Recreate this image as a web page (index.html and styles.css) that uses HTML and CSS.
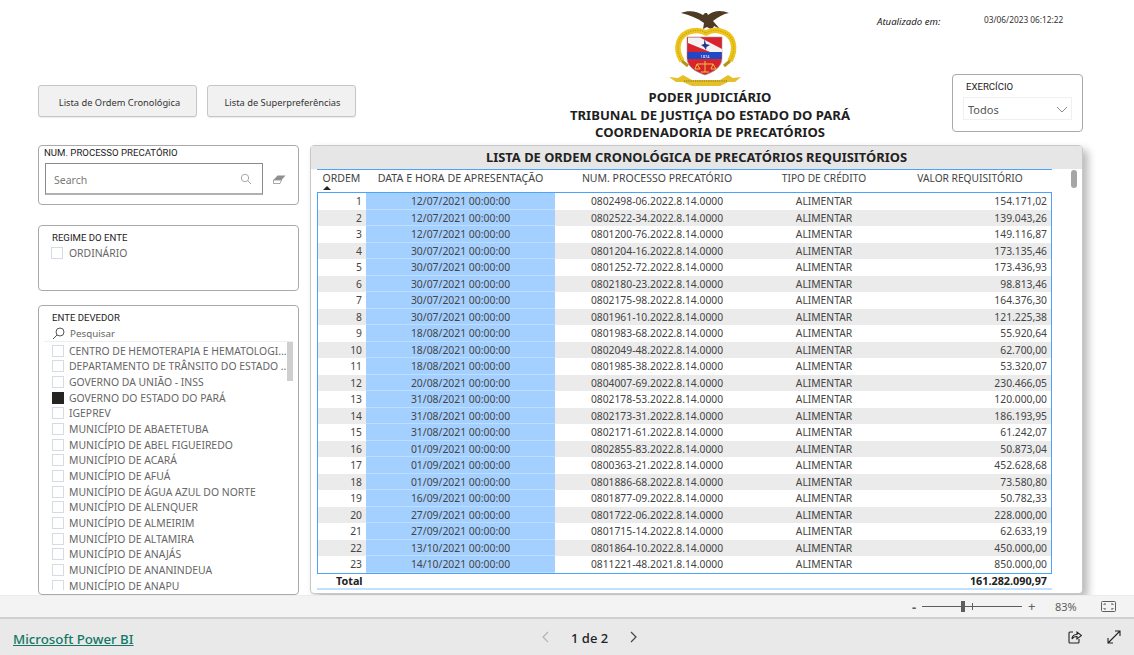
FILE: index.html
```html
<!DOCTYPE html>
<html lang="pt-BR">
<head>
<meta charset="utf-8">
<title>Lista de Ordem Cronológica</title>
<link rel="stylesheet" href="styles.css">
</head>
<body>
<main class="canvas">
  <header class="top">
    <nav class="tabs">
      <button class="tab tab-a">Lista de Ordem Cronológica</button>
      <button class="tab tab-b">Lista de Superpreferências</button>
    </nav>
    <div class="brand">
      <svg class="logo" viewBox="0 0 72 80" width="72" height="80" aria-label="Brasão">
        <path d="M11 5 C18 2 27 3 33 7 L35 5 L37 5 L38 7 C44 2 52 2 59 5 C53 6 48 9 43 13 L50 21 L44 18 L42 22 L37 19 L33 21 L34 15 C27 10 20 7 11 5 Z" fill="#4f3a26"/>
        <path d="M12 53 C4 40 8 26 22 23 C30 21 34 24 36 25 C38 24 43 21 50 23 C64 26 67 40 60 53" fill="none" stroke="#eec51c" stroke-width="5.5"/>
        <path d="M12 53 C4 40 8 26 22 23 C30 21 34 24 36 25 C38 24 43 21 50 23 C64 26 67 40 60 53" fill="none" stroke="#b99c1e" stroke-width="1.2" stroke-dasharray="1 1.4"/>
        <path d="M12 53 L18 58 M60 53 L54 58" stroke="#b89412" stroke-width="3"/>
        <path d="M-1 69 L8 70 L13 67 L22 72 L50 72 L58 67 L63 70 L71 69 L65 74 L58 74 L50 78 L22 78 L13 74 L6 74 Z" fill="#e6c02a"/>
        <path d="M14 73 H58" stroke="#80701f" stroke-width="1.2" stroke-dasharray="1.2 1"/>
        <path d="M17 29 H52 V50 C52 59 44 64 35 67 C26 64 17 59 17 50 Z" fill="#d8232f" stroke="#9a9a9a" stroke-width=".6"/>
        <path d="M18 29.5 H30 L52 41 V44 H40 L18 35 Z" fill="#f3f1f1"/>
        <path d="M34.5 31 L36 36 L40 37 L36.5 39 L36 42 L34 39 L31 37 L34 36 Z" fill="#23348f"/>
        <rect x="17.5" y="44" width="34" height="7" fill="#2148c4"/>
        <text class="logo-year" x="35" y="49.5" text-anchor="middle">1874</text>
        <path d="M35 53 V64 M27 56 H43 M27 56 L25 61 H30 Z M43 56 L41 61 H46 Z M31 64 H39" fill="none" stroke="#e7c23a" stroke-width="1"/>
      </svg>
      <h1 class="title">PODER JUDICIÁRIO<br>TRIBUNAL DE JUSTIÇA DO ESTADO DO PARÁ<br>COORDENADORIA DE PRECATÓRIOS</h1>
    </div>
    <div class="side">
      <div class="updated">
        <span class="updated-label">Atualizado em:</span>
        <span class="updated-date">03/06/2023 06:12:22</span>
      </div>
      <section class="card year">
        <h2 class="card-label">EXERCÍCIO</h2>
        <div class="select">
          <span>Todos</span>
          <svg width="12" height="7" viewBox="0 0 12 7"><path d="M1 1 L6 6 L11 1" fill="none" stroke="#8a8a8a"/></svg>
        </div>
      </section>
    </div>
  </header>

  <div class="body">
    <aside class="filters">
      <section class="card search-card">
        <h2 class="card-label">NUM. PROCESSO PRECATÓRIO</h2>
        <div class="search-row">
          <div class="search-box">
            <span class="search-text">Search</span>
            <svg width="12" height="12" viewBox="0 0 12 12"><circle cx="5" cy="5" r="3.7" fill="none" stroke="#a8a8a8"/><path d="M7.8 7.8 L11 11" stroke="#a8a8a8"/></svg>
          </div>
          <svg class="eraser" width="13" height="9" viewBox="0 0 13 9"><path d="M4.5 0.5 H12.5 L8.5 5 H0.5 Z" fill="#8f8f8f"/><path d="M0.5 5 H8.5 L7 8.5 H0.5 Z" fill="#fff" stroke="#8f8f8f" stroke-width=".8"/></svg>
        </div>
      </section>

      <section class="card regime">
        <h2 class="card-label">REGIME DO ENTE</h2>
        <div class="opt"><i class="box"></i>ORDINÁRIO</div>
      </section>

      <section class="card ente">
        <h2 class="card-label">ENTE DEVEDOR</h2>
        <div class="find">
          <svg width="13" height="13" viewBox="0 0 13 13"><circle cx="8" cy="5" r="4" fill="none" stroke="#555"/><path d="M5 8 L1 12" stroke="#555"/></svg>
          <span>Pesquisar</span>
        </div>
        <div class="list">
          <div class="opt"><i class="box"></i><span class="opt-text">CENTRO DE HEMOTERAPIA E HEMATOLOGI...</span></div>
          <div class="opt"><i class="box"></i><span class="opt-text">DEPARTAMENTO DE TRÂNSITO DO ESTADO ...</span></div>
          <div class="opt"><i class="box"></i><span class="opt-text">GOVERNO DA UNIÃO - INSS</span></div>
          <div class="opt"><i class="box box-on"></i><span class="opt-text">GOVERNO DO ESTADO DO PARÁ</span></div>
          <div class="opt"><i class="box"></i><span class="opt-text">IGEPREV</span></div>
          <div class="opt"><i class="box"></i><span class="opt-text">MUNICÍPIO DE ABAETETUBA</span></div>
          <div class="opt"><i class="box"></i><span class="opt-text">MUNICÍPIO DE ABEL FIGUEIREDO</span></div>
          <div class="opt"><i class="box"></i><span class="opt-text">MUNICÍPIO DE ACARÁ</span></div>
          <div class="opt"><i class="box"></i><span class="opt-text">MUNICÍPIO DE AFUÁ</span></div>
          <div class="opt"><i class="box"></i><span class="opt-text">MUNICÍPIO DE ÁGUA AZUL DO NORTE</span></div>
          <div class="opt"><i class="box"></i><span class="opt-text">MUNICÍPIO DE ALENQUER</span></div>
          <div class="opt"><i class="box"></i><span class="opt-text">MUNICÍPIO DE ALMEIRIM</span></div>
          <div class="opt"><i class="box"></i><span class="opt-text">MUNICÍPIO DE ALTAMIRA</span></div>
          <div class="opt"><i class="box"></i><span class="opt-text">MUNICÍPIO DE ANAJÁS</span></div>
          <div class="opt"><i class="box"></i><span class="opt-text">MUNICÍPIO DE ANANINDEUA</span></div>
          <div class="opt"><i class="box"></i><span class="opt-text">MUNICÍPIO DE ANAPU</span></div>
          <div class="list-thumb"></div>
        </div>
      </section>
    </aside>

    <section class="panel">
      <h2 class="panel-title">LISTA DE ORDEM CRONOLÓGICA DE PRECATÓRIOS REQUISITÓRIOS</h2>
      <div class="table">
        <div class="row head">
          <div class="hc hc-ordem">ORDEM<svg class="sort" width="8" height="4" viewBox="0 0 8 4"><path d="M4 0 L8 4 H0 Z" fill="#222"/></svg></div>
          <div class="hc hc-data">DATA E HORA DE APRESENTAÇÃO</div>
          <div class="hc hc-num">NUM. PROCESSO PRECATÓRIO</div>
          <div class="hc">TIPO DE CRÉDITO</div>
          <div class="hc">VALOR REQUISITÓRIO</div>
        </div>
        <div class="rows">
          <div class="row"><div class="n">1</div><div class="d">12/07/2021 00:00:00</div><div class="c">0802498-06.2022.8.14.0000</div><div class="c">ALIMENTAR</div><div class="v">154.171,02</div></div>
          <div class="row"><div class="n">2</div><div class="d">12/07/2021 00:00:00</div><div class="c">0802522-34.2022.8.14.0000</div><div class="c">ALIMENTAR</div><div class="v">139.043,26</div></div>
          <div class="row"><div class="n">3</div><div class="d">12/07/2021 00:00:00</div><div class="c">0801200-76.2022.8.14.0000</div><div class="c">ALIMENTAR</div><div class="v">149.116,87</div></div>
          <div class="row"><div class="n">4</div><div class="d">30/07/2021 00:00:00</div><div class="c">0801204-16.2022.8.14.0000</div><div class="c">ALIMENTAR</div><div class="v">173.135,46</div></div>
          <div class="row"><div class="n">5</div><div class="d">30/07/2021 00:00:00</div><div class="c">0801252-72.2022.8.14.0000</div><div class="c">ALIMENTAR</div><div class="v">173.436,93</div></div>
          <div class="row"><div class="n">6</div><div class="d">30/07/2021 00:00:00</div><div class="c">0802180-23.2022.8.14.0000</div><div class="c">ALIMENTAR</div><div class="v">98.813,46</div></div>
          <div class="row"><div class="n">7</div><div class="d">30/07/2021 00:00:00</div><div class="c">0802175-98.2022.8.14.0000</div><div class="c">ALIMENTAR</div><div class="v">164.376,30</div></div>
          <div class="row"><div class="n">8</div><div class="d">30/07/2021 00:00:00</div><div class="c">0801961-10.2022.8.14.0000</div><div class="c">ALIMENTAR</div><div class="v">121.225,38</div></div>
          <div class="row"><div class="n">9</div><div class="d">18/08/2021 00:00:00</div><div class="c">0801983-68.2022.8.14.0000</div><div class="c">ALIMENTAR</div><div class="v">55.920,64</div></div>
          <div class="row"><div class="n">10</div><div class="d">18/08/2021 00:00:00</div><div class="c">0802049-48.2022.8.14.0000</div><div class="c">ALIMENTAR</div><div class="v">62.700,00</div></div>
          <div class="row"><div class="n">11</div><div class="d">18/08/2021 00:00:00</div><div class="c">0801985-38.2022.8.14.0000</div><div class="c">ALIMENTAR</div><div class="v">53.320,07</div></div>
          <div class="row"><div class="n">12</div><div class="d">20/08/2021 00:00:00</div><div class="c">0804007-69.2022.8.14.0000</div><div class="c">ALIMENTAR</div><div class="v">230.466,05</div></div>
          <div class="row"><div class="n">13</div><div class="d">31/08/2021 00:00:00</div><div class="c">0802178-53.2022.8.14.0000</div><div class="c">ALIMENTAR</div><div class="v">120.000,00</div></div>
          <div class="row"><div class="n">14</div><div class="d">31/08/2021 00:00:00</div><div class="c">0802173-31.2022.8.14.0000</div><div class="c">ALIMENTAR</div><div class="v">186.193,95</div></div>
          <div class="row"><div class="n">15</div><div class="d">31/08/2021 00:00:00</div><div class="c">0802171-61.2022.8.14.0000</div><div class="c">ALIMENTAR</div><div class="v">61.242,07</div></div>
          <div class="row"><div class="n">16</div><div class="d">01/09/2021 00:00:00</div><div class="c">0802855-83.2022.8.14.0000</div><div class="c">ALIMENTAR</div><div class="v">50.873,04</div></div>
          <div class="row"><div class="n">17</div><div class="d">01/09/2021 00:00:00</div><div class="c">0800363-21.2022.8.14.0000</div><div class="c">ALIMENTAR</div><div class="v">452.628,68</div></div>
          <div class="row"><div class="n">18</div><div class="d">01/09/2021 00:00:00</div><div class="c">0801886-68.2022.8.14.0000</div><div class="c">ALIMENTAR</div><div class="v">73.580,80</div></div>
          <div class="row"><div class="n">19</div><div class="d">16/09/2021 00:00:00</div><div class="c">0801877-09.2022.8.14.0000</div><div class="c">ALIMENTAR</div><div class="v">50.782,33</div></div>
          <div class="row"><div class="n">20</div><div class="d">27/09/2021 00:00:00</div><div class="c">0801722-06.2022.8.14.0000</div><div class="c">ALIMENTAR</div><div class="v">228.000,00</div></div>
          <div class="row"><div class="n">21</div><div class="d">27/09/2021 00:00:00</div><div class="c">0801715-14.2022.8.14.0000</div><div class="c">ALIMENTAR</div><div class="v">62.633,19</div></div>
          <div class="row"><div class="n">22</div><div class="d">13/10/2021 00:00:00</div><div class="c">0801864-10.2022.8.14.0000</div><div class="c">ALIMENTAR</div><div class="v">450.000,00</div></div>
          <div class="row"><div class="n">23</div><div class="d">14/10/2021 00:00:00</div><div class="c">0811221-48.2021.8.14.0000</div><div class="c">ALIMENTAR</div><div class="v">850.000,00</div></div>
        </div>
        <div class="total">
          <span>Total</span>
          <span>161.282.090,97</span>
        </div>
      </div>
      <div class="table-thumb"></div>
    </section>
  </div>
</main>

<div class="zoombar">
  <span class="z-minus">-</span>
  <div class="z-track"><i class="z-knob"></i><i class="z-tick"></i></div>
  <span class="z-plus">+</span>
  <span class="z-pct">83%</span>
  <svg class="z-fit" width="15" height="11" viewBox="0 0 15 11"><rect x=".5" y=".5" width="14" height="10" rx="1" fill="none" stroke="#605e5c"/><path d="M3 4 V3 H5 M10 3 H12 V4 M12 7 V8 H10 M5 8 H3 V7" fill="none" stroke="#605e5c"/></svg>
</div>

<footer class="footer">
  <a class="pbi" href="#">Microsoft Power BI</a>
  <div class="pager">
    <svg width="9" height="12" viewBox="0 0 9 12"><path d="M7 1 L2 6 L7 11" fill="none" stroke="#b5b5b5" stroke-width="1.2"/></svg>
    <span class="pages">1 de 2</span>
    <svg width="9" height="12" viewBox="0 0 9 12"><path d="M2 1 L7 6 L2 11" fill="none" stroke="#444" stroke-width="1.2"/></svg>
  </div>
  <div class="actions">
    <svg width="14" height="14" viewBox="0 0 14 14"><path d="M5 2 H2 Q1 2 1 3 V12 Q1 13 2 13 H10 Q11 13 11 12 V9" fill="none" stroke="#222" stroke-width="1.1"/><path d="M4 9 C4 6 6 4.5 9 4.5 V2 L13.5 5.5 L9 9 V6.5 C7 6.5 5 7 4 9 Z" fill="none" stroke="#222" stroke-width="1.1"/></svg>
    <svg width="14" height="14" viewBox="0 0 14 14"><path d="M1 13 L13 1 M8 1 H13 V6 M1 8 V13 H6" fill="none" stroke="#222" stroke-width="1.1"/></svg>
  </div>
</footer>
</body>
</html>
```

FILE: styles.css
```css
* { box-sizing: border-box; }
html, body { margin: 0; height: 100%; }
body {
  width: 1134px;
  height: 655px;
  overflow: hidden;
  background: #fff;
  font-family: "Noto Sans", "Open Sans", sans-serif;
  color: #333;
  display: flex;
  flex-direction: column;
}
h1, h2 { margin: 0; font-weight: normal; }

.canvas { height: 595px; flex: none; overflow: hidden; background: #fff; display: flex; flex-direction: column; }

/* top band */
.top { height: 145px; flex: none; display: flex; padding-left: 38px; }
.tabs { width: 522px; flex: none; display: flex; align-items: flex-start; gap: 10px; padding-top: 85px; }
.tab {
  height: 32px;
  background: #f1f1f1;
  border: 1px solid #c6c6c6;
  border-radius: 3px;
  box-shadow: 0 1px 1px rgba(0,0,0,.08);
  font: 9.3px "Noto Sans", sans-serif;
  color: #333;
  padding: 2px 0 0;
}
.tab-a { width: 159px; padding-left: 4px; }
.tab-b { width: 149px; padding-left: 2px; }
.brand { width: 300px; flex: none; display: flex; flex-direction: column; align-items: center; padding-top: 8px; }
.logo { display: block; height: 80px; flex: none; filter: blur(.35px); transform: translateX(-4px); overflow: visible; }
.logo-year { font: 4px "Noto Sans", sans-serif; fill: #fff; }
.title { margin-top: 1px; font-size: 13.1px; font-weight: 700; line-height: 17.5px; text-align: center; color: #1f1f1f; white-space: nowrap; }
.side { flex: 1; }
.updated { height: 74px; display: flex; align-items: flex-start; padding-left: 17px; }
.updated-label { width: 107px; padding-top: 15px; font-size: 9.6px; font-style: italic; color: #222; }
.updated-date { padding-top: 14px; font-size: 8.3px; color: #333; }

/* cards */
.card { background: #fff; border: 1px solid #a9a9a9; border-radius: 4px; }
.card-label { font: 400 9.6px/12px Roboto, "Noto Sans", sans-serif; color: #222; white-space: nowrap; }
.year { width: 131px; height: 58px; margin-left: 92px; padding: 6px 10px 0 13px; }
.select { margin: 4px 0 0 -3px; height: 23px; width: 109px; border: 1px solid #f0f0f0; display: flex; align-items: center; justify-content: space-between; padding: 2px 3px 0 4px; font-size: 11px; color: #555; }

/* main band */
.body { flex: 1; min-height: 0; display: flex; padding-left: 38px; gap: 11px; }
.filters { width: 261px; flex: none; display: flex; flex-direction: column; }
.search-card { height: 60px; padding: 1px 6px 0 5px; }
.search-row { display: flex; align-items: center; gap: 10px; margin-top: 4px; padding-left: 1px; }
.search-box { width: 218px; height: 32px; border: 1px solid #8a8a8a; border-bottom: 2px solid #b0b0b0; display: flex; align-items: center; justify-content: space-between; padding: 0 10px 0 8px; font-size: 10.5px; color: #7a7a7a; }
.search-text { padding-top: 3px; }
.regime { height: 66px; margin-top: 20px; padding: 6px 12px 0 13px; }
.regime .opt { margin-top: 1px; margin-left: -1px; }
.regime .box { margin-right: 6px; }
.opt { display: flex; align-items: center; height: 15.67px; font-size: 10.4px; color: #666; white-space: nowrap; }
.box { width: 12px; height: 12px; flex: none; margin-right: 5px; border: 1px solid #d4dbe4; background: #fff; }
.box-on { background: #252423; border-color: #252423; }
.ente { flex: 1; min-height: 0; margin-top: 14px; padding: 6px 0 0; display: flex; flex-direction: column; }
.ente .card-label { padding-left: 13px; }
.find { display: flex; align-items: center; gap: 5px; height: 16px; margin-top: 1px; padding-left: 13px; font-size: 9.8px; color: #666; }
.list { position: relative; flex: 1; min-height: 0; margin: 0 5px 4px; padding: 1px 0 0 8px; overflow: hidden; border-top: 1px solid #efefef; }
.list-thumb { position: absolute; top: 0; right: 0; width: 6px; height: 39px; background: #cfcfcf; }

/* table panel */
.panel { position: relative; width: 773px; height: 449px; flex: none; background: #fff; border: 1px solid #c8c8c8; border-radius: 4px; box-shadow: 5px 5px 9px rgba(0,0,0,.28); }
.panel-title { height: 23px; background: #e6e6e6; font-size: 12.9px; font-weight: 700; line-height: 23px; text-align: center; color: #222; white-space: nowrap; }
.table { width: 735px; margin-left: 6px; border-top: 1px solid #4aa3ff; }
.row { display: grid; grid-template-columns: 48px 189px 204px 130px 162px; height: 16.5px; font-size: 10.3px; line-height: 16.5px; color: #444; }
.rows { border: 1px solid #4aa3ff; }
.rows .row:nth-child(even) { background: #ebebeb; }
.head { height: 22px; padding-left: 1px; line-height: 17px; font-size: 10.2px; color: #444; }
.hc { position: relative; text-align: center; white-space: nowrap; }
.hc-ordem { font-size: 10.5px; margin-left: -1px; }
.hc-data { font-size: 10.7px; }
.hc-num { font-size: 10.5px; }
.sort { position: absolute; left: 6px; top: 16px; display: block; }
.n { text-align: right; padding-right: 4px; background: inherit; }
.d { text-align: center; font-size: 10.4px; background: #a4d0ff; box-shadow: inset 0 -1px #bfdeff; color: #444; }
.c { text-align: center; }
.v { text-align: right; padding-right: 4px; }
.total { display: flex; justify-content: space-between; height: 16px; padding: 0 5px 0 19px; font-size: 10.8px; font-weight: 700; line-height: 14px; color: #222; border-bottom: 2px solid #c2e0ff; }
.table-thumb { position: absolute; top: 24px; right: 5px; width: 6px; height: 18px; border-radius: 3px; background: #a6a6a6; }

/* zoom bar */
.zoombar { height: 24px; flex: none; background: #f3f3f3; border-top: 1px solid #ececec; border-bottom: 2px solid #cfcfcf; display: flex; align-items: center; padding-left: 912px; font-size: 11px; color: #605e5c; }
.z-minus { width: 10px; font-weight: 700; font-size: 13px; }
.z-track { position: relative; width: 100px; height: 1px; background: #605e5c; }
.z-knob { position: absolute; left: 39px; top: -5px; width: 4px; height: 11px; background: #605e5c; }
.z-tick { position: absolute; left: 50px; top: -3px; width: 1px; height: 7px; background: #605e5c; }
.z-plus { width: 33px; padding-left: 6px; font-size: 13px; line-height: 1; }
.z-pct { width: 46px; font-size: 11px; }
.z-fit { display: block; }

/* footer */
.footer { flex: 1; background: #e9e9e9; display: flex; align-items: center; padding: 0 13px; }
.pbi { width: 528px; padding-top: 3px; font-size: 13.3px; font-weight: 500; color: #117865; text-decoration: underline; white-space: nowrap; }
.pager { display: flex; align-items: center; gap: 21px; width: 527px; }
.pages { font-size: 13px; font-weight: 500; color: #222; padding-top: 1px; }
.actions { display: flex; gap: 25px; align-items: center; }
.actions svg { display: block; }
```
